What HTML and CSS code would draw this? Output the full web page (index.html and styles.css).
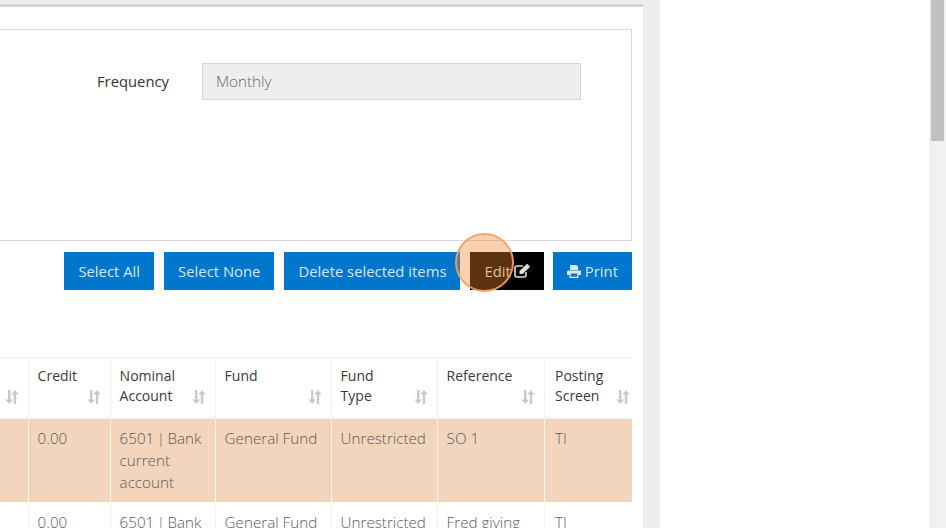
FILE: index.html
```html
<!DOCTYPE html>
<html lang="en">
<head>
<meta charset="utf-8">
<title>Standing order</title>
<link rel="stylesheet" href="styles.css">
</head>
<body>
<svg class="defs" width="0" height="0" aria-hidden="true">
  <symbol id="sort" viewBox="0 0 14 14">
    <path d="M3 0h2.4v9.4H8L4.2 14 .4 9.4H3zM8.8 14V4.6H6.2L10 0l3.8 4.6h-2.6V14z" fill="currentColor"/>
  </symbol>
</svg>
<div class="app">
  <main class="main">
    <section class="panel">
      <div class="box">
        <div class="field">
          <label class="field-label">Frequency</label>
          <div class="field-input">Monthly</div>
        </div>
      </div>
      <div class="actions">
        <button class="btn">Select All</button>
        <button class="btn">Select None</button>
        <button class="btn">Delete selected items</button>
        <button class="btn btn-dark">Edit
          <svg class="ico-edit" viewBox="0 0 16 14" width="16" height="14"><path d="M12 8v3a2 2 0 0 1-2 2H3a2 2 0 0 1-2-2V4a2 2 0 0 1 2-2h6" fill="none" stroke="currentColor" stroke-width="1.6"/><path d="M5.500 7 12.600.2a.8.8 0 0 1 1.100 0l1.900 1.900a.8.8 0 0 1 0 1.100L8.800 10H5.500z" fill="currentColor"/></svg>
        </button>
        <button class="btn">
          <svg class="ico-print" viewBox="0 0 14 13" width="14" height="13"><path d="M3 0h6.500L11 1.500V5H3zM1.500 5.500H14V10h-2.500v3h-9v-3H0V7a1.500 1.500 0 0 1 1.500-1.500zM3.800 8.500v3.200h6.400V8.500z" fill="currentColor" fill-rule="evenodd"/></svg>
          Print</button>
      </div>
      <table class="grid">
        <colgroup>
          <col class="c0"><col class="c1"><col class="c2"><col class="c3"><col class="c4"><col class="c5"><col class="c6">
        </colgroup>
        <thead>
          <tr>
            <th><svg class="sort"><use href="#sort"/></svg></th>
            <th>Credit<svg class="sort"><use href="#sort"/></svg></th>
            <th>Nominal Account<svg class="sort"><use href="#sort"/></svg></th>
            <th>Fund<svg class="sort"><use href="#sort"/></svg></th>
            <th>Fund Type<svg class="sort"><use href="#sort"/></svg></th>
            <th>Reference<svg class="sort"><use href="#sort"/></svg></th>
            <th>Posting Screen<svg class="sort"><use href="#sort"/></svg></th>
          </tr>
        </thead>
        <tbody>
          <tr class="selected">
            <td></td><td>0.00</td><td>6501&thinsp;|&thinsp;Bank current account</td><td>General Fund</td><td>Unrestricted</td><td>SO 1</td><td>TI</td>
          </tr>
          <tr>
            <td></td><td>0.00</td><td>6501&thinsp;|&thinsp;Bank current account</td><td>General Fund</td><td>Unrestricted</td><td>Fred giving</td><td>TI</td>
          </tr>
        </tbody>
      </table>
    </section>
  </main>
  <div class="blank"></div>
  <div class="scrollbar"><div class="thumb"></div></div>
</div>
<div class="spot"></div>
</body>
</html>
```
FILE: styles.css
```css
* { box-sizing: border-box; }
html, body { margin: 0; height: 528px; overflow: hidden; }
body { font-family: "Open Sans", "Liberation Sans", sans-serif; font-size: 15.2px; font-weight: 300; color: #333; background: #fff; }
.defs { position: absolute; }
.app { display: flex; height: 528px; }
.main { width: 660px; background: #eeedee; padding-top: 4px; overflow: hidden; }
.panel { width: 643px; background: #fff; border-top: 3px solid #d1d3dd; padding: 22px 11px 0 0; height: 600px; }
.box { height: 212px; border: 1px solid #d8d8d8; border-left: 0; padding-top: 33px; }
.field { display: flex; justify-content: flex-end; align-items: center; padding-right: 50px; }
.field-label { margin: -2px 33px 0 0; color: #333; font-weight: 400; font-size: 14.8px; }
.field-input { width: 379px; height: 37px; line-height: 35px; padding-left: 13px; background: #eee; border: 1px solid #d5d5d5; color: #666; }
.actions { display: flex; justify-content: flex-end; gap: 10px; margin-top: 11px; }
.btn { height: 38px; padding: 0 14px; border: 0; background: #0076cc; color: #d5e8f7; font: inherit; font-weight: 400; font-size: 14.85px; display: flex; align-items: center; gap: 3px; }
.btn-dark { background: #000; margin-right: -1px; color: #ddd; }
.ico-print { margin-right: 1px; }
.grid { width: 632px; margin-top: 67px; table-layout: fixed; border-collapse: separate; border-spacing: 0; border-top: 1px solid #f3f3f3; }
.c0 { width: 29px; } .c1 { width: 82px; } .c2 { width: 105px; } .c3 { width: 116px; }
.c4 { width: 106px; } .c5 { width: 107px; } .c6 { width: 87px; }
th { position: relative; height: 61px; padding: 8px 32px 8px 8.6px; font-weight: 400; font-size: 14px; text-align: left; vertical-align: top; line-height: 20px; color: #3a3a3a; border-right: 1px solid #f1f1f1; border-bottom: 2px solid #f4f4f4; }
th:last-child { padding-right: 20px; }
th:last-child, td:last-child { border-right: 0; padding-left: 10px; }
.sort { position: absolute; right: 9px; bottom: 13px; width: 14px; height: 14px; color: #c9c9c9; }
th:last-child .sort { right: 2px; }
td { padding: 8px 9px 9px 8.6px; line-height: 22px; vertical-align: top; color: #5a5a5a; border-right: 1px solid #f1f1f1; border-bottom: 1px solid #f1f1f1; }
.selected td { height: 84px; background: #f3d5bd; border-right-color: #fbf3ec; border-bottom-color: #fff; }
.blank { flex: 1; background: #fff; }
.scrollbar { width: 17px; background: #f1f1f1; padding: 0 2px; }
.thumb { height: 141px; background: #c1c1c1; }
.spot { position: absolute; left: 455px; top: 233px; width: 59px; height: 59px; border-radius: 50%; background: rgba(240, 134, 50, .38); border: 2px solid rgba(242, 160, 100, .9); }
```
